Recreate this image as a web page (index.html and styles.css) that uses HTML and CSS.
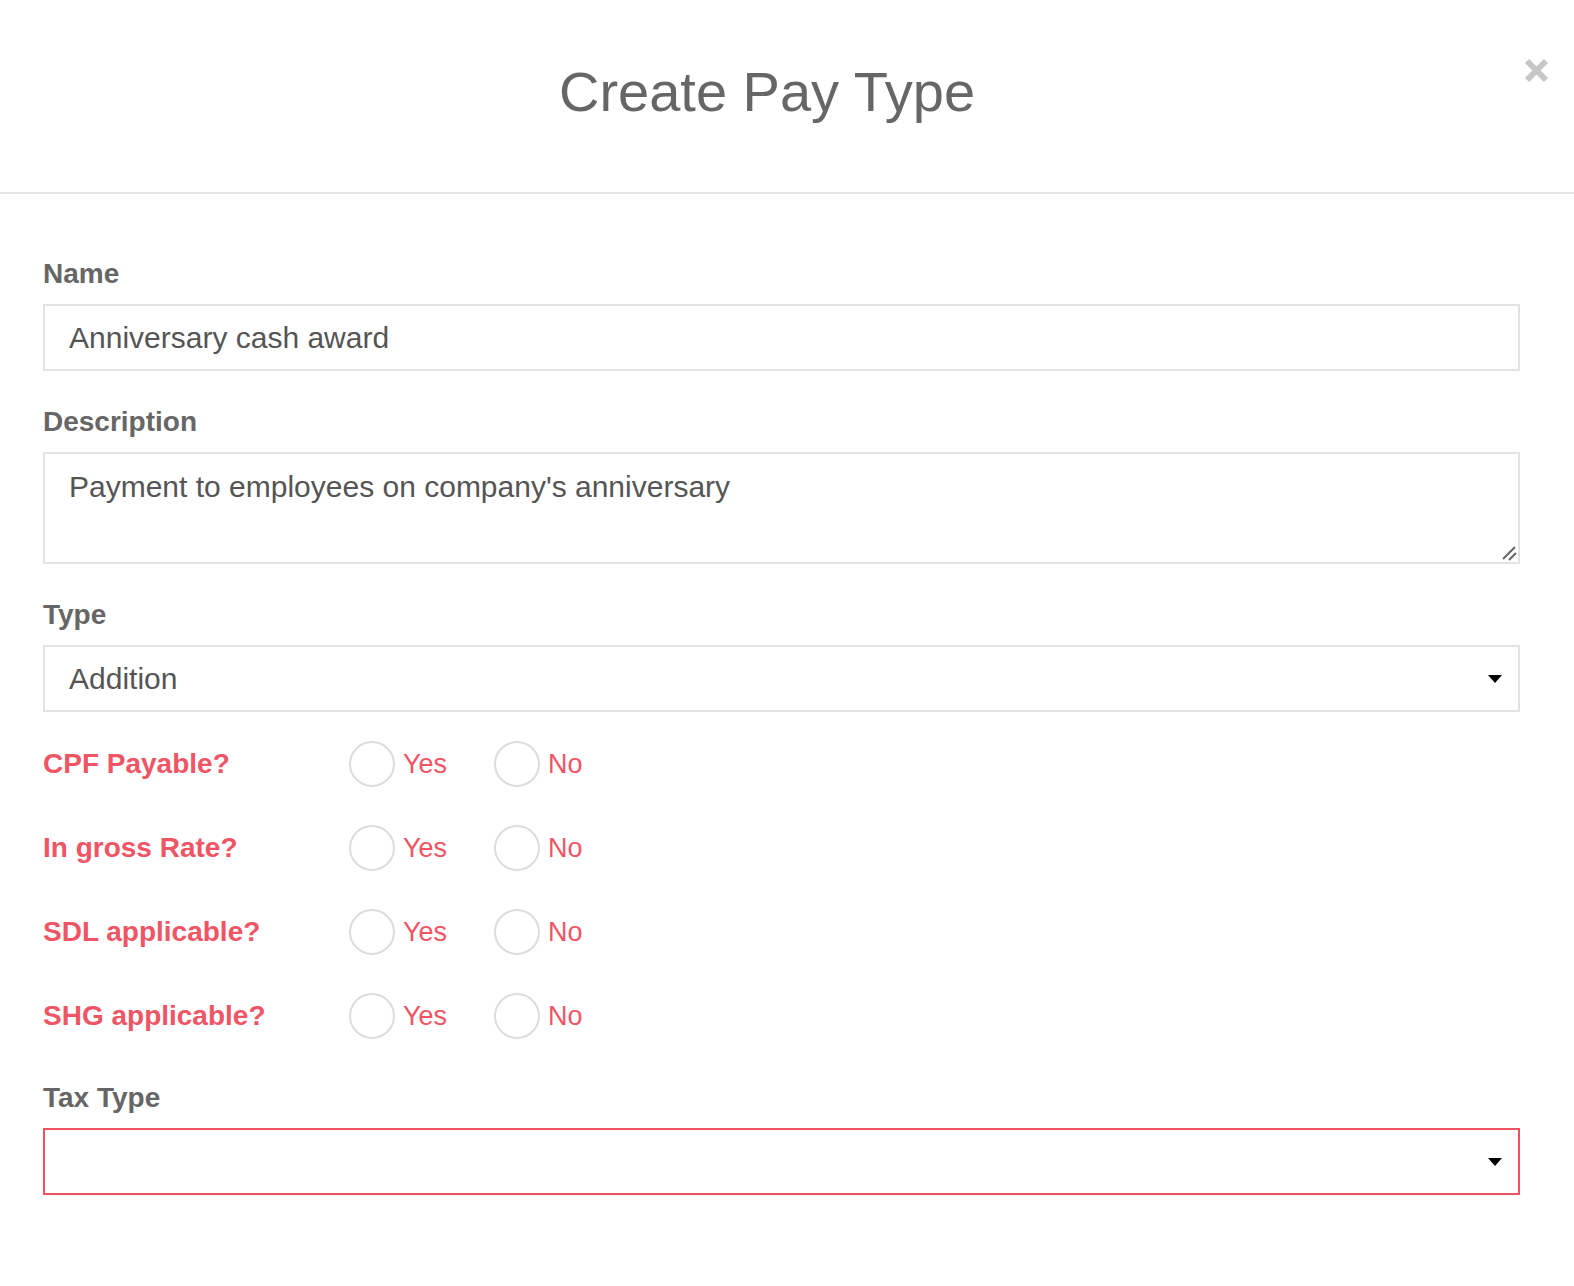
FILE: index.html
```html
<!DOCTYPE html>
<html lang="en">
<head>
<meta charset="utf-8">
<title>Create Pay Type</title>
<link rel="stylesheet" href="styles.css">
</head>
<body>
<div class="modal">
  <div class="modal-header">
    <h1 class="modal-title">Create Pay Type</h1>
    <button class="close" type="button" aria-label="Close">
      <svg width="25" height="25" viewBox="0 0 25 25"><path d="M3 3 L22 22 M22 3 L3 22" stroke="#c6c6c6" stroke-width="6" stroke-linecap="butt"/></svg>
    </button>
  </div>
  <form class="modal-body">
    <div class="form-group">
      <label class="label">Name</label>
      <input class="control" type="text" value="Anniversary cash award">
    </div>
    <div class="form-group">
      <label class="label">Description</label>
      <div class="textarea-wrap">
        <textarea class="control textarea">Payment to employees on company's anniversary</textarea>
        <svg class="grip" width="16" height="16" viewBox="0 0 16 16"><path d="M2 14 L14 2 M8 15 L15 8" stroke="#666" stroke-width="2"/></svg>
      </div>
    </div>
    <div class="form-group form-group-tight">
      <label class="label">Type</label>
      <div class="control select">
        <span>Addition</span>
        <svg class="caret" width="14" height="8" viewBox="0 0 14 8"><path d="M0 0 H14 L7 8 Z" fill="#000"/></svg>
      </div>
    </div>
    <div class="radio-group">
      <div class="radio-row">
        <span class="radio-label">CPF Payable?</span>
        <label class="radio"><span class="circle"></span>Yes</label>
        <label class="radio"><span class="circle"></span>No</label>
      </div>
      <div class="radio-row">
        <span class="radio-label">In gross Rate?</span>
        <label class="radio"><span class="circle"></span>Yes</label>
        <label class="radio"><span class="circle"></span>No</label>
      </div>
      <div class="radio-row">
        <span class="radio-label">SDL applicable?</span>
        <label class="radio"><span class="circle"></span>Yes</label>
        <label class="radio"><span class="circle"></span>No</label>
      </div>
      <div class="radio-row">
        <span class="radio-label">SHG applicable?</span>
        <label class="radio"><span class="circle"></span>Yes</label>
        <label class="radio"><span class="circle"></span>No</label>
      </div>
    </div>
    <div class="form-group">
      <label class="label">Tax Type</label>
      <div class="control select error">
        <span></span>
        <svg class="caret" width="14" height="8" viewBox="0 0 14 8"><path d="M0 0 H14 L7 8 Z" fill="#000"/></svg>
      </div>
    </div>
  </form>
</div>
</body>
</html>
```
FILE: styles.css
```css
* { box-sizing: border-box; }
html, body {
  margin: 0;
  padding: 0;
  background: #fff;
}
body {
  font-family: "Liberation Sans", Arial, Helvetica, sans-serif;
  color: #666;
}
.modal {
  width: 1574px;
  min-height: 1286px;
  background: #fff;
}
.modal-header {
  position: relative;
  height: 194px;
  padding: 61px 40px 0 0;
  border-bottom: 2px solid #e5e5e5;
  text-align: center;
}
.modal-title {
  margin: 0;
  font-size: 56px;
  line-height: 62px;
  font-weight: normal;
  color: #666;
}
.close {
  position: absolute;
  top: 58px;
  right: 25px;
  width: 25px;
  height: 25px;
  padding: 0;
  border: 0;
  background: none;
  display: flex;
}
.modal-body {
  display: flex;
  flex-direction: column;
  padding: 60px 54px 0 43px;
}
.form-group {
  display: flex;
  flex-direction: column;
  gap: 10px;
  margin-bottom: 31px;
}
.form-group-tight {
  margin-bottom: 29px;
}
.label {
  font-size: 28px;
  line-height: 40px;
  font-weight: bold;
  color: #666;
}
.control {
  width: 100%;
  height: 67px;
  border: 2px solid #e3e3e3;
  border-radius: 0;
  padding: 10px 24px;
  font-family: inherit;
  font-size: 30px;
  line-height: 43px;
  color: #555;
  background: #fff;
  outline: none;
}
.textarea-wrap {
  position: relative;
}
.textarea {
  height: 112px;
  padding-top: 11px;
  resize: none;
  display: block;
}
.grip {
  position: absolute;
  right: 3px;
  bottom: 3px;
}
.select {
  display: flex;
  align-items: center;
  justify-content: space-between;
  padding-right: 16px;
}
.select.error {
  border-color: #ee5364;
}
.caret {
  display: block;
}
.radio-group {
  display: flex;
  flex-direction: column;
  gap: 38px;
  margin-bottom: 39px;
}
.radio-row {
  display: flex;
  align-items: center;
  height: 46px;
}
.radio-label {
  width: 306px;
  font-size: 28px;
  font-weight: bold;
  color: #ef5565;
}
.radio {
  display: flex;
  align-items: center;
  gap: 8px;
  margin-right: 47px;
  font-size: 27px;
  color: #ef5565;
}
.circle {
  width: 46px;
  height: 46px;
  border: 2px solid #dddcd8;
  border-radius: 50%;
  background: #fff;
}
```
